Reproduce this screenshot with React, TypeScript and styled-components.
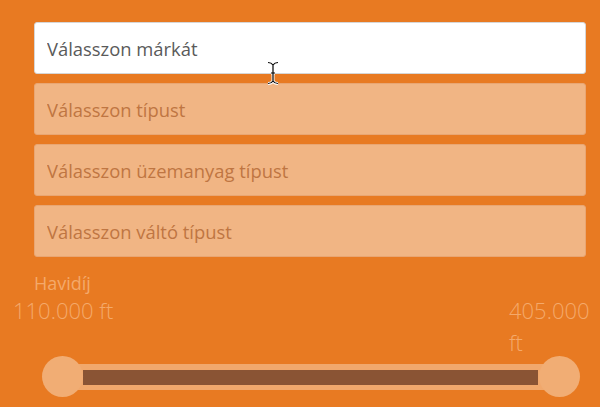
import React from "react";
import styled, { createGlobalStyle } from "styled-components";

const GlobalStyle = createGlobalStyle`
  html, body {
    margin: 0;
    padding: 0;
    background: #e87a22;
    font-family: "Open Sans", "Liberation Sans", sans-serif;
  }
  * { box-sizing: border-box; }
`;

const Page = styled.div`
  position: relative;
  width: 600px;
  height: 407px;
  overflow: hidden;
  background: #e87a22;
  display: flex;
  flex-direction: column;
`;

const Form = styled.div`
  display: flex;
  flex-direction: column;
  gap: 9px;
  width: 552px;
  margin: 22px 0 0 34px;
`;

const Field = styled.input<{ $active?: boolean }>`
  height: 52px;
  width: 100%;
  padding: 0 12px;
  border-radius: 3px;
  font-family: inherit;
  font-size: 18.4px;
  outline: none;
  border: 1px solid ${(p) => (p.$active ? "#d6d6d6" : "#e9a673")};
  background: ${(p) => (p.$active ? "#ffffff" : "#f1b584")};
  &::placeholder {
    color: ${(p) => (p.$active ? "#5a5a5a" : "#bf7542")};
    opacity: 1;
  }
`;

const PriceTitle = styled.div`
  margin: 15px 0 0 34px;
  font-size: 18px;
  line-height: 22px;
  color: #f4a96a;
`;

const SliderArea = styled.div`
  position: relative;
  height: 114px;
  padding-top: 70px;
`;

const ValueLabel = styled.div<{ $side: "left" | "right" }>`
  position: absolute;
  top: 0;
  font-size: 22px;
  font-weight: 300;
  line-height: 32px;
  color: #f4a96a;
  ${(p) =>
    p.$side === "left"
      ? "left: 13px; white-space: nowrap;"
      : "left: 509px; width: 88px;"}
`;

const Track = styled.div`
  position: relative;
  margin-left: 62px;
  width: 497px;
  height: 26px;
  padding: 6px 21px 5px;
  background: #f1a86c;
`;

const Range = styled.div`
  height: 100%;
  background: #8a5434;
`;

const Handle = styled.div<{ $at: number }>`
  position: absolute;
  top: -8px;
  left: ${(p) => p.$at - 20.5}px;
  width: 41px;
  height: 41px;
  border-radius: 50%;
  background: #f1ad74;
`;

const Cursor = styled.svg`
  position: absolute;
  left: 266px;
  top: 61px;
  pointer-events: none;
`;

export default function App() {
  return (
    <>
      <GlobalStyle />
      <Page>
        <Form>
          <Field $active placeholder="Válasszon márkát" />
          <Field placeholder="Válasszon típust" />
          <Field placeholder="Válasszon üzemanyag típust" />
          <Field placeholder="Válasszon váltó típust" />
        </Form>
        <PriceTitle>Havidíj</PriceTitle>
        <SliderArea>
          <ValueLabel $side="left">110.000 ft</ValueLabel>
          <ValueLabel $side="right">405.000 ft</ValueLabel>
          <Track>
            <Range />
            <Handle $at={0} />
            <Handle $at={497} />
          </Track>
        </SliderArea>
        <Cursor width="14" height="24" viewBox="0 0 14 24">
          <path
            d="M2 1.5 C4.5 1.5 6 2.5 7 4 C8 2.5 9.5 1.5 12 1.5 M7 4 V20 M2 22.5 C4.5 22.5 6 21.5 7 20 C8 21.5 9.5 22.5 12 22.5 M5 12 H9"
            fill="none"
            stroke="#ffffff"
            strokeWidth="3"
          />
          <path
            d="M2 1.5 C4.5 1.5 6 2.5 7 4 C8 2.5 9.5 1.5 12 1.5 M7 4 V20 M2 22.5 C4.5 22.5 6 21.5 7 20 C8 21.5 9.5 22.5 12 22.5 M5 12 H9"
            fill="none"
            stroke="#000000"
            strokeWidth="1.2"
          />
        </Cursor>
      </Page>
    </>
  );
}
